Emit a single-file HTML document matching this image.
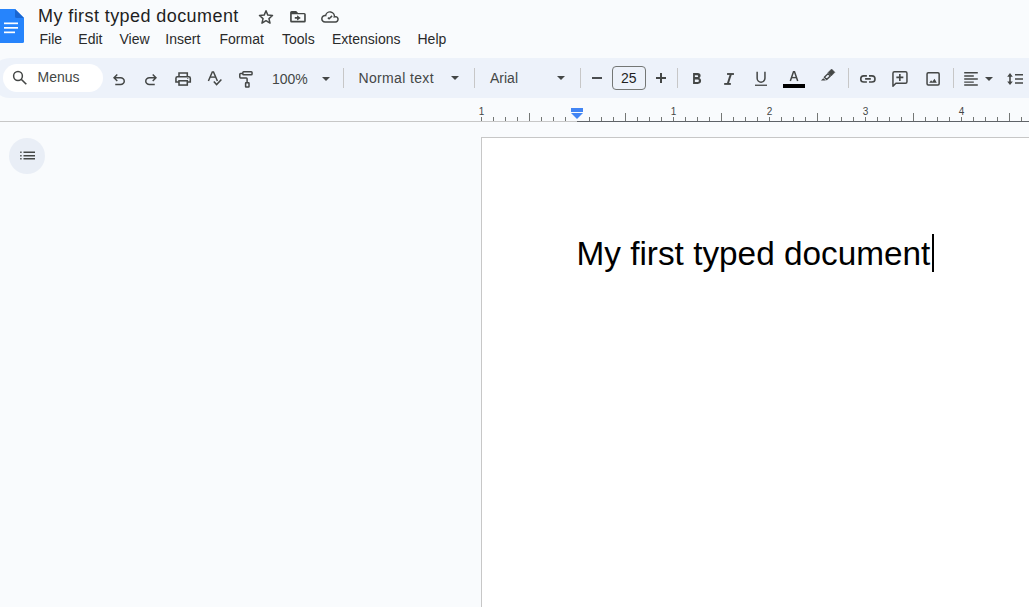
<!DOCTYPE html>
<html><head><meta charset="utf-8">
<style>
*{margin:0;padding:0;box-sizing:border-box}
html,body{width:1029px;height:607px;overflow:hidden;background:#f9fbfd;font-family:"Liberation Sans",sans-serif;position:relative}
.a{position:absolute}
.t{position:absolute;white-space:nowrap;line-height:1}
svg{position:absolute;overflow:visible}
.menu{font-size:14px;color:#2a2a2a;top:32px}
.tb{font-size:14px;color:#444746}
.sep{position:absolute;width:1px;height:20px;top:68px;background:#c7c7c7}
.arr{position:absolute;width:0;height:0;border-left:4px solid transparent;border-right:4px solid transparent;border-top:4px solid #444746}
</style></head><body>

<!-- Docs logo -->
<svg class="a" style="left:0;top:0" width="40" height="50" viewBox="0 0 40 50">
  <path d="M-2 9 H15 L24 18 V41.5 Q24 43 22.5 43 H-2 Z" fill="#2684fc"/>
  <path d="M15 9 L24 18 H16.5 Q15 18 15 16.5 Z" fill="#1966d2"/>
  <rect x="4" y="22.5" width="14" height="1.7" fill="#fff"/>
  <rect x="4" y="27.0" width="14" height="1.7" fill="#fff"/>
  <rect x="4" y="31.5" width="11" height="1.7" fill="#fff"/>
</svg>

<div class="t" id="title" style="left:38px;top:7px;font-size:18px;letter-spacing:0.42px;color:#1f1f1f">My first typed document</div>

<!-- title icons -->
<svg style="left:256px;top:7px" width="20" height="20" viewBox="0 0 20 20">
  <path d="M10.00 3.75 L11.82 8.09 L16.51 8.48 L12.95 11.56 L14.03 16.14 L10.00 13.70 L5.97 16.14 L7.05 11.56 L3.49 8.48 L8.18 8.09 Z" fill="none" stroke="#444746" stroke-width="1.5" stroke-linejoin="round"/>
</svg>
<svg style="left:286px;top:7px" width="24" height="20" viewBox="0 0 24 20">
  <path fill="#444746" fill-rule="evenodd" d="M4.1 5.6 Q4.1 4.1 5.6 4.1 H10.2 L12.1 6.1 H18.3 Q19.8 6.1 19.8 7.6 V14 Q19.8 15.5 18.3 15.5 H5.6 Q4.1 15.5 4.1 14 Z M5.75 7.25 H18.15 V13.85 H5.75 Z"/>
  <path fill="#444746" d="M8.8 10.05 H11.1 V8.3 L14.8 10.9 L11.1 13.5 V11.75 H8.8 Z"/>
</svg>
<svg style="left:318px;top:7px" width="24" height="20" viewBox="0 0 24 20">
  <path d="M7.05 14.95 H17.4 A2.65 2.65 0 1 0 16.36 9.86 A4.4 4.4 0 0 0 7.65 8.61 A3.2 3.2 0 1 0 7.05 14.95 Z" fill="none" stroke="#444746" stroke-width="1.5"/>
  <path d="M9.9 10.6 L11.1 11.8 L14.1 8.9" fill="none" stroke="#444746" stroke-width="1.5"/>
</svg>

<!-- menu -->
<div class="t menu" style="left:39.5px">File</div>
<div class="t menu" style="left:78.3px">Edit</div>
<div class="t menu" style="left:119.5px">View</div>
<div class="t menu" style="left:165.3px">Insert</div>
<div class="t menu" style="left:219.5px">Format</div>
<div class="t menu" style="left:282px">Tools</div>
<div class="t menu" style="left:332px">Extensions</div>
<div class="t menu" style="left:417.5px">Help</div>

<!-- toolbar -->
<div class="a" style="left:-10px;top:58px;width:1100px;height:40px;border-radius:20px;background:#edf2fa"></div>
<div class="a" style="left:2.5px;top:63.5px;width:100px;height:28.5px;border-radius:14px;background:#fff"></div>
<svg style="left:10px;top:68px" width="20" height="20" viewBox="0 0 20 20">
  <circle cx="8" cy="8" r="4.4" fill="none" stroke="#444746" stroke-width="1.5"/>
  <path d="M11.2 11.2 L16.3 16.3" stroke="#444746" stroke-width="1.6"/>
</svg>
<div class="t tb" style="left:37.5px;top:70px">Menus</div>


<!-- undo / redo -->
<svg style="left:110px;top:70.7px" width="18" height="18" viewBox="0 -960 960 960">
  <path fill="#444746" d="M280-200v-80h284q63 0 109.5-40T720-420q0-60-46.5-100T564-560H312l104 104-56 56-200-200 200-200 56 56-104 104h252q97 0 166.5 63T800-420q0 94-69.5 157T564-200H280Z"/>
</svg>
<svg style="left:142px;top:70.7px" width="18" height="18" viewBox="0 -960 960 960">
  <path fill="#444746" d="M396-200q-97 0-166.5-63T160-420q0-94 69.5-157T396-640h252L544-744l56-56 200 200-200 200-56-56 104-104H396q-63 0-109.5 40T240-420q0 60 46.5 100T396-280h284v80H396Z"/>
</svg>
<!-- print -->
<svg style="left:174px;top:69px" width="18" height="18" viewBox="0 0 18 18">
  <path d="M5 7.75 V3.9 H13.3 V7.75" fill="none" stroke="#444746" stroke-width="1.55"/>
  <path d="M5 13.05 H1.95 V9.25 Q1.95 7.75 3.45 7.75 H14.8 Q16.3 7.75 16.3 9.25 V13.05 H13.3" fill="none" stroke="#444746" stroke-width="1.55"/>
  <rect x="5" y="11.8" width="8.3" height="4.25" fill="none" stroke="#444746" stroke-width="1.55"/>
  <circle cx="13.8" cy="9.5" r="0.6" fill="#444746"/>
</svg>
<!-- spellcheck -->
<svg style="left:206px;top:69px" width="18" height="18" viewBox="0 0 18 18">
  <path d="M2.4 12 L6.3 3.0 H7.5 L11.4 12" fill="none" stroke="#444746" stroke-width="1.5"/>
  <path d="M4.2 8.1 H9.6" stroke="#444746" stroke-width="1.4"/>
  <path d="M7.8 12.6 L10.6 15.6 L15.4 10.6" fill="none" stroke="#444746" stroke-width="1.5"/>
</svg>
<!-- paint format -->
<svg style="left:237px;top:69px" width="18" height="18" viewBox="0 0 18 18">
  <rect x="5.85" y="2.75" width="9.2" height="3.0" rx="0.8" fill="none" stroke="#444746" stroke-width="1.5"/>
  <path d="M5.85 4.5 H3.6 Q2.8 4.5 2.8 5.3 V8.1 Q2.8 8.9 3.6 8.9 H9.3 Q10.1 8.9 10.1 9.7 V13.6" fill="none" stroke="#444746" stroke-width="1.5"/>
  <rect x="8.6" y="13.75" width="3.4" height="4.3" rx="0.4" fill="none" stroke="#444746" stroke-width="1.5"/>
</svg>

<div class="t tb" style="left:272px;top:72px">100%</div>
<div class="arr" style="left:322px;top:77px"></div>
<div class="sep" style="left:343px"></div>
<div class="t tb" style="left:358.5px;top:71px;letter-spacing:0.35px">Normal text</div>
<div class="arr" style="left:451px;top:76px"></div>
<div class="sep" style="left:474px"></div>
<div class="t tb" style="left:490px;top:71px">Arial</div>
<div class="arr" style="left:557px;top:76.3px"></div>
<div class="sep" style="left:580px"></div>
<div class="a" style="left:592px;top:77.2px;width:9.8px;height:1.6px;background:#4a4d50"></div>
<div class="a" style="left:612px;top:66px;width:34px;height:24px;border:1px solid #747775;border-radius:4px"></div>
<div class="t tb" style="left:621px;top:71px;color:#1f1f1f">25</div>
<div class="a" style="left:656px;top:77px;width:10px;height:1.6px;background:#444746"></div>
<div class="a" style="left:660.2px;top:72.8px;width:1.6px;height:10px;background:#444746"></div>
<div class="sep" style="left:677px"></div>
<!-- B I U -->
<svg style="left:688px;top:69px" width="18" height="18" viewBox="0 0 18 18">
  <path d="M5.07 4.07 H9.7 Q12.6 4.07 12.6 6.7 Q12.6 8.2 11.3 8.9 Q13.1 9.6 13.1 11.6 Q13.1 14.9 9.8 14.9 H5.07 Z M6.88 6.25 V8.06 H9.3 Q10.14 8.06 10.14 7.15 Q10.14 6.25 9.3 6.25 Z M6.88 10.6 V12.95 H9.7 Q10.87 12.95 10.87 11.78 Q10.87 10.6 9.7 10.6 Z" fill="#444746" fill-rule="evenodd"/>
</svg>
<svg style="left:720px;top:69px" width="18" height="18" viewBox="0 0 18 18">
  <path d="M7.06 5.0 H13.94" stroke="#444746" stroke-width="1.85"/>
  <path d="M4.16 14.95 H10.86" stroke="#444746" stroke-width="1.85"/>
  <path d="M10.9 5.0 L7.7 14.95" stroke="#444746" stroke-width="2"/>
</svg>
<svg style="left:752px;top:69px" width="18" height="18" viewBox="0 0 18 18">
  <path d="M5.15 2.8 V9.25 A3.9 3.9 0 0 0 12.95 9.25 V2.8" fill="none" stroke="#444746" stroke-width="1.5"/>
  <rect x="3" y="15.6" width="12" height="1.3" fill="#444746"/>
</svg>
<!-- text color -->
<svg style="left:785px;top:69px" width="18" height="18" viewBox="0 0 18 18">
  <path d="M5.3 11.9 L8.5 2.8 H9.5 L12.7 11.9" fill="none" stroke="#444746" stroke-width="1.5"/>
  <path d="M6.6 8.6 H11.4" stroke="#444746" stroke-width="1.4"/>
</svg>
<div class="a" style="left:783px;top:84px;width:22px;height:3.6px;background:#000"></div>
<!-- highlighter -->
<svg style="left:816px;top:64px" width="24" height="24" viewBox="0 0 24 24">
  <path d="M15.6 5.0 L18.9 8.3 L15.3 11.9 L12.0 8.6 Z" fill="#444746" stroke="#444746" stroke-width="0.5" stroke-linejoin="round"/>
  <path d="M12.03 9.62 L14.33 11.92 L10.67 15.58 L8.37 13.28 Z" fill="none" stroke="#444746" stroke-width="1.4" stroke-linejoin="round"/>
  <path d="M4.9 16.6 L7.3 14.2 L9.9 16.6 Z" fill="#444746"/>
</svg>
<div class="sep" style="left:848px"></div>
<!-- link -->
<svg style="left:859px;top:69px" width="18" height="18" viewBox="0 0 18 18">
  <path d="M7.9 6.9 H4.8 A3.05 3.05 0 0 0 4.8 13 H7.9 M10 6.9 H12.95 A3.05 3.05 0 0 1 12.95 13 H10 M6.1 9.85 H11.8" fill="none" stroke="#444746" stroke-width="1.6"/>
</svg>
<!-- comment -->
<svg style="left:891px;top:69px" width="18" height="18" viewBox="0 0 18 18">
  <path d="M1.95 17.2 V4.35 Q1.95 2.85 3.45 2.85 H14.45 Q15.95 2.85 15.95 4.35 V12.75 Q15.95 14.25 14.45 14.25 H4.9 Z" fill="none" stroke="#444746" stroke-width="1.5" stroke-linejoin="round"/>
  <path d="M8.85 4.9 V11.9 M5.35 8.4 H12.35" stroke="#444746" stroke-width="1.6"/>
</svg>
<!-- image -->
<svg style="left:924px;top:69px" width="18" height="18" viewBox="0 0 18 18">
  <rect x="3.05" y="3.85" width="12.1" height="12.1" rx="1.2" fill="none" stroke="#444746" stroke-width="1.5"/>
  <path d="M5.2 13.8 L7.1 11.3 L8.3 12.7 L10.5 9.8 L12.8 13.8 Z" fill="#444746"/>
</svg>
<div class="sep" style="left:953px"></div>
<!-- align -->
<svg style="left:962px;top:69px" width="18" height="18" viewBox="0 0 18 18">
  <path d="M2.2 3.7 H15.8 M2.2 6.9 H11.8 M2.2 9.95 H15.8 M2.2 13.1 H11.8 M2.2 16.05 H15.8" stroke="#444746" stroke-width="1.45"/>
</svg>
<div class="arr" style="left:985px;top:77.3px"></div>
<!-- line spacing -->
<svg style="left:1005px;top:69px" width="18" height="18" viewBox="0 0 18 18">
  <path d="M5 6.5 V13.5" stroke="#444746" stroke-width="1.6"/>
  <path d="M2.2 7.8 L5 4.0 L7.8 7.8 Z M2.2 12.6 L5 16.0 L7.8 12.6 Z" fill="#444746"/>
  <path d="M10 5.7 H18 M10 9.9 H18 M10 14.0 H18" stroke="#444746" stroke-width="1.55"/>
</svg>

<!-- ruler -->
<div class="a" style="left:0;top:121px;width:577px;height:1px;background:#c7c7c7"></div>
<div class="a" style="left:577px;top:121px;width:460px;height:1px;background:#5f6368"></div>
<div class="a" style="left:481px;top:117px;width:1px;height:4px;background:#747775"></div>
<div class="a" style="left:493px;top:117px;width:1px;height:4px;background:#747775"></div>
<div class="a" style="left:505px;top:117px;width:1px;height:4px;background:#747775"></div>
<div class="a" style="left:517px;top:117px;width:1px;height:4px;background:#747775"></div>
<div class="a" style="left:529px;top:113px;width:1px;height:8px;background:#747775"></div>
<div class="a" style="left:541px;top:117px;width:1px;height:4px;background:#747775"></div>
<div class="a" style="left:553px;top:117px;width:1px;height:4px;background:#747775"></div>
<div class="a" style="left:565px;top:117px;width:1px;height:4px;background:#747775"></div>
<div class="a" style="left:589px;top:117px;width:1px;height:4px;background:#747775"></div>
<div class="a" style="left:601px;top:117px;width:1px;height:4px;background:#747775"></div>
<div class="a" style="left:613px;top:117px;width:1px;height:4px;background:#747775"></div>
<div class="a" style="left:625px;top:113px;width:1px;height:8px;background:#747775"></div>
<div class="a" style="left:637px;top:117px;width:1px;height:4px;background:#747775"></div>
<div class="a" style="left:649px;top:117px;width:1px;height:4px;background:#747775"></div>
<div class="a" style="left:661px;top:117px;width:1px;height:4px;background:#747775"></div>
<div class="a" style="left:673px;top:117px;width:1px;height:4px;background:#747775"></div>
<div class="a" style="left:685px;top:117px;width:1px;height:4px;background:#747775"></div>
<div class="a" style="left:697px;top:117px;width:1px;height:4px;background:#747775"></div>
<div class="a" style="left:709px;top:117px;width:1px;height:4px;background:#747775"></div>
<div class="a" style="left:721px;top:113px;width:1px;height:8px;background:#747775"></div>
<div class="a" style="left:733px;top:117px;width:1px;height:4px;background:#747775"></div>
<div class="a" style="left:745px;top:117px;width:1px;height:4px;background:#747775"></div>
<div class="a" style="left:757px;top:117px;width:1px;height:4px;background:#747775"></div>
<div class="a" style="left:769px;top:117px;width:1px;height:4px;background:#747775"></div>
<div class="a" style="left:781px;top:117px;width:1px;height:4px;background:#747775"></div>
<div class="a" style="left:793px;top:117px;width:1px;height:4px;background:#747775"></div>
<div class="a" style="left:805px;top:117px;width:1px;height:4px;background:#747775"></div>
<div class="a" style="left:817px;top:113px;width:1px;height:8px;background:#747775"></div>
<div class="a" style="left:829px;top:117px;width:1px;height:4px;background:#747775"></div>
<div class="a" style="left:841px;top:117px;width:1px;height:4px;background:#747775"></div>
<div class="a" style="left:853px;top:117px;width:1px;height:4px;background:#747775"></div>
<div class="a" style="left:865px;top:117px;width:1px;height:4px;background:#747775"></div>
<div class="a" style="left:877px;top:117px;width:1px;height:4px;background:#747775"></div>
<div class="a" style="left:889px;top:117px;width:1px;height:4px;background:#747775"></div>
<div class="a" style="left:901px;top:117px;width:1px;height:4px;background:#747775"></div>
<div class="a" style="left:913px;top:113px;width:1px;height:8px;background:#747775"></div>
<div class="a" style="left:925px;top:117px;width:1px;height:4px;background:#747775"></div>
<div class="a" style="left:937px;top:117px;width:1px;height:4px;background:#747775"></div>
<div class="a" style="left:949px;top:117px;width:1px;height:4px;background:#747775"></div>
<div class="a" style="left:961px;top:117px;width:1px;height:4px;background:#747775"></div>
<div class="a" style="left:973px;top:117px;width:1px;height:4px;background:#747775"></div>
<div class="a" style="left:985px;top:117px;width:1px;height:4px;background:#747775"></div>
<div class="a" style="left:997px;top:117px;width:1px;height:4px;background:#747775"></div>
<div class="a" style="left:1009px;top:113px;width:1px;height:8px;background:#747775"></div>
<div class="a" style="left:1021px;top:117px;width:1px;height:4px;background:#747775"></div>
<div class="a" style="left:1033px;top:117px;width:1px;height:4px;background:#747775"></div>
<div class="t" style="left:471px;width:21px;text-align:center;top:107px;font-size:10px;color:#444746">1</div>
<div class="t" style="left:663px;width:21px;text-align:center;top:107px;font-size:10px;color:#444746">1</div>
<div class="t" style="left:759px;width:21px;text-align:center;top:107px;font-size:10px;color:#444746">2</div>
<div class="t" style="left:855px;width:21px;text-align:center;top:107px;font-size:10px;color:#444746">3</div>
<div class="t" style="left:951px;width:21px;text-align:center;top:107px;font-size:10px;color:#444746">4</div>
<div class="a" style="left:571px;top:108px;width:12px;height:4px;background:#4285f4"></div>
<svg style="left:571px;top:113px" width="12" height="6" viewBox="0 0 12 6"><path d="M0 0 H12 L6 6 Z" fill="#4285f4"/></svg>

<!-- outline button -->
<div class="a" style="left:9px;top:137.5px;width:36px;height:36px;border-radius:50%;background:#e9eef6"></div>
<svg style="left:18px;top:146.1px" width="18" height="18" viewBox="0 0 18 18">
  <path d="M2.2 6.2 H3.6 M2.2 9.7 H3.6 M2.2 12.8 H3.6 M5.5 6.2 H17 M5.5 9.7 H17 M5.5 12.8 H17" stroke="#444746" stroke-width="1.5"/>
</svg>

<!-- page -->
<div class="a" style="left:481px;top:137px;width:600px;height:500px;background:#fff;border:1px solid #c7c7c7"></div>
<div class="t" id="doc" style="left:576.5px;top:237px;font-size:33.33px;color:#000">My first typed document</div>
<div class="a" style="left:932px;top:234px;width:2px;height:38px;background:#000"></div>

</body></html>
